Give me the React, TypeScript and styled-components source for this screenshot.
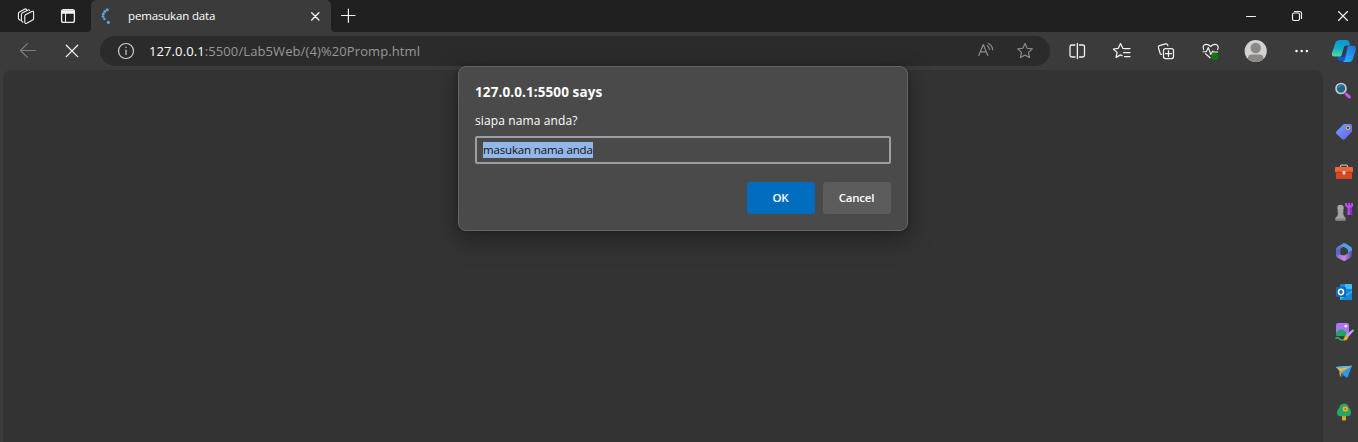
import React from "react";
import styled, { createGlobalStyle } from "styled-components";

const GlobalStyle = createGlobalStyle`
  * { box-sizing: border-box; }
  body { margin: 0; background: #3b3b3b; overflow: hidden; font-family: "Open Sans", "Noto Sans", sans-serif; }
`;

const Browser = styled.div`
  width: 1358px;
  height: 442px;
  display: flex;
  flex-direction: column;
  background: #3b3b3b;
  color: #fff;
`;

const TabBar = styled.div`
  height: 32px;
  display: flex;
  flex: none;
`;

const TabStripStart = styled.div`
  width: 91px;
  padding-left: 14px;
  display: flex;
  align-items: center;
  gap: 18px;
  background: #202020;
  border-bottom-right-radius: 4px;
`;

const TabBack = styled.div`
  width: 240px;
  background: linear-gradient(#202020 50%, #3b3b3b 50%);
`;

const Tab = styled.div`
  height: 32px;
  padding: 0 4px 0 3px;
  display: flex;
  align-items: center;
  background: #3b3b3b;
  border-radius: 5px 5px 0 0;
`;

const TabTitle = styled.span`
  flex: 1;
  margin-left: 10px;
  font-size: 11.5px;
  line-height: 16px;
  letter-spacing: -0.16px;
  white-space: nowrap;
`;

const TabStripEnd = styled.div`
  flex: 1;
  padding: 0 3px 0 5px;
  display: flex;
  align-items: center;
  background: #202020;
  border-bottom-left-radius: 4px;
`;

const WindowControls = styled.div`
  margin-left: auto;
  display: flex;
  gap: 22px;
`;

const Toolbar = styled.div`
  height: 38px;
  flex: none;
  display: flex;
  align-items: center;
  padding: 0 2px 0 16px;
`;

const Nav = styled.div`
  display: flex;
  gap: 20px;
`;

const AddressBar = styled.div`
  width: 950px;
  height: 30px;
  margin-left: 16px;
  padding: 0 13px 0 14px;
  display: flex;
  align-items: center;
  background: #2b2b2b;
  border-radius: 15px;
`;

const Url = styled.span`
  flex: 1;
  margin-left: 11px;
  font-size: 13px;
  line-height: 20px;
  letter-spacing: 0.1px;
  color: #989898;
  white-space: nowrap;
`;

const Host = styled.span`
  color: #fff;
`;

const Tools = styled.div`
  margin-left: 15px;
  display: flex;
  flex: 1;
  justify-content: space-between;
`;

const Glyph = styled.svg<{ $gap?: number }>`
  display: block;
  flex: none;
  width: 24px;
  height: 24px;
  margin-left: ${(p) => p.$gap ?? 0}px;
  overflow: visible;
`;

const Main = styled.div`
  flex: 1;
  display: flex;
  padding-left: 3px;
`;

const Page = styled.div`
  width: 1320px;
  background: #333;
  border-radius: 8px 8px 0 0;
`;

const Sidebar = styled.div`
  flex: 1;
  padding: 10px 0 0 9px;
  display: flex;
  flex-direction: column;
  gap: 16px;
`;

const Dialog = styled.div`
  position: absolute;
  left: 458px;
  top: 66px;
  width: 450px;
  height: 165px;
  padding: 15px 16px 16px;
  display: flex;
  flex-direction: column;
  background: #4a4a4a;
  border: 1px solid #666;
  border-radius: 8px;
  box-shadow: 0 8px 26px rgba(0, 0, 0, 0.38), 0 0 4px rgba(0, 0, 0, 0.2);
`;

const DialogTitle = styled.div`
  font-size: 13.5px;
  font-weight: 700;
  line-height: 20px;
  letter-spacing: 0.1px;
`;

const Message = styled.div`
  margin-top: 9px;
  font-size: 12px;
  line-height: 20px;
  letter-spacing: 0.12px;
`;

const Field = styled.div`
  height: 28px;
  margin-top: 5px;
  padding: 0 6px;
  display: flex;
  align-items: center;
  border: 2px solid #9aa0a6;
  border-radius: 2px;
`;

const Selection = styled.span`
  height: 16px;
  background: #94b7e9;
  color: #111;
  font-size: 11.5px;
  line-height: 16px;
  letter-spacing: -0.16px;
  white-space: nowrap;
`;

const Actions = styled.div`
  margin-top: 18px;
  display: flex;
  justify-content: flex-end;
  gap: 8px;
`;

const Button = styled.button<{ $primary?: boolean }>`
  width: 68px;
  height: 32px;
  padding: 0 1px 2px 0;
  border: 0;
  border-radius: 3px;
  background: ${(p) => (p.$primary ? "#006cbe" : "#5c5c5c")};
  color: #fff;
  font: 600 11.5px "Open Sans", "Noto Sans", sans-serif;
  letter-spacing: -0.2px;
`;

type IconProps = { gap?: number; color?: string; width?: number; children: React.ReactNode };

const Icon = ({ gap, color = "#f2f2f2", width = 1.15, children }: IconProps) => (
  <Glyph $gap={gap} viewBox="0 0 24 24" fill="none" stroke={color} strokeWidth={width} strokeLinecap="round" strokeLinejoin="round">
    {children}
  </Glyph>
);

const Art = ({ children }: { children: React.ReactNode }) => (
  <Glyph viewBox="0 0 24 24">{children}</Glyph>
);

const star = "M12 4.6l2.2 4.7 5.1.6-3.8 3.5 1 5.1-4.5-2.5-4.5 2.5 1-5.1-3.8-3.5 5.1-.6z";

const SidebarIcons = () => (
  <>
    <Art>
      <path d="M14.2 14.2l3.2 2.8" stroke="#d34cf4" strokeWidth="3" strokeLinecap="round" />
      <circle cx="9" cy="8.5" r="5" fill="#23658b" stroke="#c5c7c8" strokeWidth="1.7" />
      <path d="M6.5 8a3 3 0 0 1 3-2.5" fill="none" stroke="#3a91b9" strokeWidth="1.2" />
    </Art>
    <Art>
      <path d="M4.6 11.2L11.8 4h6.4q1.8 0 1.8 1.8v6l-7 7.2q-1.5 1.5-3 0l-5.4-5q-1.4-1.4 0-2.8z" fill="url(#tagBlue)" />
      <circle cx="16" cy="7.8" r="1.7" fill="#34435b" stroke="#f3c724" strokeWidth="1" />
    </Art>
    <Art>
      <path d="M8.5 8V6.2q0-1 1-1h5q1 0 1 1V8" fill="none" stroke="#b6b6b6" strokeWidth="1.3" />
      <rect x="3" y="7" width="18" height="5.5" rx="1" fill="#f06438" />
      <path d="M4 12h16v6q0 1-1 1H5q-1 0-1-1z" fill="#d64821" />
      <path d="M4 12.2h16" stroke="#a93419" strokeWidth=".8" />
      <rect x="10.5" y="11" width="3" height="3.6" rx="1" fill="#d9d9d9" />
    </Art>
    <Art>
      <path d="M13 3h2v2h1V3h2v2h1V3h2v3l-1.5 2 .8 7h-5l.4-7L13 6z" fill="#b84af1" />
      <path d="M17.5 8l.4 7h2.4l-.8-7z" fill="#8a2bd0" />
      <circle cx="8.5" cy="8" r="3.2" fill="#a8a8a8" />
      <path d="M5.5 10.5h6v1.8H11l.8 3.7 1.6 1.5V20.5H3.5v-3L5.4 16l.8-3.7h-.7z" fill="#a2a2a2" />
      <path d="M3.5 18.6h9.9v1.9H3.5z" fill="#878787" />
    </Art>
    <Art>
      <path d="M11.5 3.3L5.3 6.9Q4 7.8 4 9.2v6q0 1.6 1.4 2.4l4.1-2.5q-1-.8-1-2V9.4q0-1 .9-1.5l4.9-2.8z" fill="url(#officeLeft)" />
      <path d="M11.3 3.5q1.2-.6 2.4 0L18.8 6.8Q20 7.7 20 9.2V14l-4.5-2.3V10q0-1-.9-1.5L10.2 6z" fill="#529ee4" />
      <path d="M20 10.5v4.7q0 1.4-1.2 2.2l-5.2 3.2q-1.4.8-2.8 0L5 17.4l1.8-2.7 4.2.3q.8.2 1.6-.3l2.5-1.5z" fill="url(#officeBottom)" />
      <path d="M8.7 9.2l3.3-1.4 4 2.4v2.7L12.200 15.600 8.700 14.800z" fill="#3b3b3b" />
    </Art>
    <Art>
      <rect x="8" y="4" width="12" height="12" rx="1" fill="#1785d8" />
      <path d="M13 4h6q1 0 1 1v4h-7z" fill="#42bdf2" />
      <path d="M8 11l6 3.5 6-3.5v8q0 1-1 1H8z" fill="#35b5ee" />
      <path d="M8 19.800l12-7.300V19q0 1-1 1z" fill="#1685d5" />
      <rect x="4" y="7" width="10" height="10" rx="1" fill="#1068be" />
      <ellipse cx="9" cy="12" rx="2.5" ry="2.700" fill="none" stroke="#fff" strokeWidth="1.500" />
    </Art>
    <Art>
      <rect x="4" y="3" width="13" height="13" rx="2" fill="#ad73f0" />
      <path d="M4 13q5-7 10-1v4H6q-2 0-2-2z" fill="#22a365" />
      <circle cx="13.8" cy="6.2" r="1.4" fill="#f8e9ff" />
      <path d="M3.5 18.8q2-2 4 .1t4.5.5" fill="none" stroke="#28b36b" strokeWidth="1.5" />
      <path d="M21.5 9.700q1 .5-.2 1.800l-5.100 5.600-2.200-2 5.800-5q1-.8 1.700-.4z" fill="#bba0ff" />
      <path d="M14.200 14.700l2.300 2.200q-1.300 4-5.100 3.500.8-4.200 2.800-5.700z" fill="#f1ad30" />
    </Art>
    <Art>
      <path d="M4 7l16-1.200L15.300 18 9.600 13.800z" fill="#279cf0" />
      <path d="M4 7l16-1.200-10.600 6.400z" fill="#f5c247" />
      <path d="M4 7l16-1.200-2 1.200L8.200 8.800z" fill="#4ab5f7" />
      <path d="M20 5.800L9.400 12.200l-.6 5.100q-2-3-1.400-6.100z" fill="#e9a629" />
      <path d="M9.900 12.900l-1.100 4.400 3.300-2.100z" fill="#1770b7" />
    </Art>
    <Art>
      <rect x="10" y="14" width="4" height="6.500" rx="1" fill="#eda225" />
      <path d="M12 3.500q4.200.2 4.800 4.100 2.400 2.100 2.200 5.300-.3 3.200-3.500 3.300H8.300Q5 16 5 12.700q0-3.200 2.300-5Q7.800 4 12 3.500z" fill="#28a66a" />
      <path d="M13.300 5.800l.8 1.200 1.500-.3-.3 1.500 1.200.8-1.200.8.3 1.500-1.500-.3-.8 1.200-.8-1.200-1.500.3.3-1.500-1.200-.8 1.200-.8-.3-1.500 1.500.3z" fill="#f5b627" />
      <circle cx="13.300" cy="9" r=".9" fill="#ba5a17" />
    </Art>
  </>
);

export default function App() {
  return (
    <Browser>
      <GlobalStyle />
      <svg width="0" height="0" style={{ position: "absolute" }}>
        <defs>
          <linearGradient id="tagBlue" x2="1" y2="1"><stop stopColor="#70a7ff" /><stop offset="1" stopColor="#655bee" /></linearGradient>
          <linearGradient id="officeLeft" x2="0" y2="1"><stop stopColor="#48b3e3" /><stop offset=".5" stopColor="#685cc4" /><stop offset="1" stopColor="#4f7bdc" /></linearGradient>
          <linearGradient id="officeBottom"><stop stopColor="#a66ad3" /><stop offset=".5" stopColor="#c489dd" /><stop offset="1" stopColor="#4a48aa" /></linearGradient>
          <linearGradient id="pilotLeft" x1=".5" x2=".3" y2="1"><stop stopColor="#0797d4" /><stop offset=".5" stopColor="#12aec4" /><stop offset="1" stopColor="#52db97" /></linearGradient>
          <linearGradient id="pilotRight" x1="1" x2=".2" y2="1"><stop stopColor="#216fd7" /><stop offset="1" stopColor="#20b5fa" /></linearGradient>
        </defs>
      </svg>
      <TabBar>
        <TabStripStart>
          <Icon width={1.1}>
            <path d="M6.200 16.200l-1.200-.9q-.6-.5-.6-1.300V9.700q0-.9.8-1.400l5.600-3.200q1-.5 1.600.5M9 18.200l-1-.8q-.6-.5-.6-1.300V10.500q0-.9.8-1.400l5.800-3.200q1-.5 1.600.4" />
            <path d="M11.500 10.700l6.200-3.300q1.800-.7 1.900 1v6.200q0 1-.9 1.500l-6 3.200q-1.700.7-1.900-1v-6.200q0-.9.700-1.400z" />
          </Icon>
          <Icon width={1.3}>
            <rect x="5.600" y="5.600" width="12.800" height="12.800" rx="2" />
            <path d="M6 7h12v2H6z" fill="#f2f2f2" />
            <path d="M9.500 9v9" width="1" strokeWidth="1" />
          </Icon>
        </TabStripStart>
        <TabBack>
          <Tab>
            <Icon color="#58a6df">
              <g fill="#58a6df" stroke="none">
                <circle cx="13.300" cy="5.800" r="1.500" /><circle cx="10.800" cy="7.400" r="1.500" /><circle cx="9.300" cy="10" r="1.500" /><circle cx="9" cy="12.600" r="1.400" /><circle cx="10.400" cy="15" r="1.300" /><circle cx="14.400" cy="18.300" r="1.600" />
              </g>
            </Icon>
            <TabTitle>pemasukan data</TabTitle>
            <Icon width={1.4}><path d="M8.700 8.700l7.200 7.200m0-7.200l-7.200 7.200" /></Icon>
          </Tab>
        </TabBack>
        <TabStripEnd>
          <Icon width={1.2}><path d="M5.500 11.500h13.500M12.400 5v13.300" /></Icon>
          <WindowControls>
            <Icon width={1}><path d="M7.500 12.500h9" /></Icon>
            <Icon><rect x="7.500" y="9" width="7" height="7.500" rx="1.400" /><path d="M9.500 7.500h5q2 0 2 2v5" /></Icon>
            <Icon><path d="M7.500 7.500l9 9m0-9l-9 9" /></Icon>
          </WindowControls>
        </TabStripEnd>
      </TabBar>
      <Toolbar>
        <Nav>
          <Icon color="#808080"><path d="M4.500 11.500h15M11.500 4.700l-7 6.800 7 6.800" /></Icon>
          <Icon width={1.300}><path d="M6.300 6.200l11.400 11.400m0-11.400L6.300 17.600" /></Icon>
        </Nav>
        <AddressBar>
          <Icon color="#d0d0d0" width={1.200}><circle cx="12" cy="12" r="7.500" /><path d="M12 11v4.500M12 8.200v.2" /></Icon>
          <Url><Host>127.0.0.1</Host>:5500/Lab5Web/(4)%20Promp.html</Url>
          <Icon color="#8e8e8e"><path d="M4.800 16.500L9.300 5.500l4.500 11M6.600 12.800h5.500M13.100 6.600q2.300 1.400 2.300 4M14.400 4.400q4 1.800 4.200 6.300" /></Icon>
          <Icon gap={15} color="#8e8e8e"><path d={star} /></Icon>
        </AddressBar>
        <Tools>
          <Icon width={1.300}><path d="M10 6H6.800Q5 6 5 7.800v8.400Q5 18 6.800 18H10M14.500 6h3.200q1.800 0 1.800 1.800v8.400q0 1.800-1.800 1.800h-3.200M12.400 4.500v15" /></Icon>
          <Icon width={1.250}><path d="M14.500 9.500l-1.700-.2-2.300-4.700-2.200 4.700-4.900.7 3.700 3.400-1 5 4.400-2.500 1.600.8M14.500 9.500H20M13.500 13.500H20M14.500 17.500H20" /></Icon>
          <Icon width={1.250}><rect x="9.500" y="9.500" width="10" height="10" rx="2" /><path d="M14.500 11.500v6M11.500 14.500h6M7.600 15.300q-1 .2-1.400-.8L4.400 8.600q-.4-1.400 1-1.900l6-1.800q1.700-.5 2.200 1l.2.800" /></Icon>
          <Icon><path d="M4.700 10.600Q3.100 7 6 5.600 8.600 4.500 11.600 7.500q3-3 5.700-1.900 3 1.400 1.300 5M4 12.700h3.300l2-4.200 2.500 7 2-3.500.8 1h4M6.500 14.800l4.600 4" /><circle cx="16" cy="17.500" r="3.500" fill="#107c10" stroke="none" /><path d="M14.500 17.600l1 1 2-2" stroke="#075607" strokeWidth=".8" /></Icon>
          <Art>
            <circle cx="12.700" cy="12" r="11.100" fill="#d4d2d0" /><circle cx="12.700" cy="9" r="5.200" fill="#8b8887" /><path d="M4.900 19.800Q4.900 15.500 8.700 15.500h8q3.800 0 3.800 4.300a11 11 0 0 1-15.600 0z" fill="#8b8887" />
          </Art>
          <Icon><g fill="#fff" stroke="none"><circle cx="8.500" cy="12" r="1.250" /><circle cx="13.700" cy="12" r="1.250" /><circle cx="18.900" cy="12" r="1.250" /></g></Icon>
          <Art>
            <path d="M6 15l6.500-9 5.500 1-4.500 15H8q-1.700 0-2.300-2z" fill="#1751dd" />
            <path d="M10.600 12.500l2-5.600q.5-1.400 1.900-1.400h1.500l-3.200 11q-.5 1.500-2 1.500H9z" fill="#3b3b3b" />
            <path d="M7.800 1h7q1.700 0 2.400 2l1 3.500h-4q-2 0-2.600 2.200l-2 7.300q-.5 1.500-2 1.500H2Q-.6 17.500 0 14L3.300 4Q4.300 1 7.800 1z" fill="url(#pilotLeft)" />
            <path d="M17 6.800h4.500q2.800.2 2.400 3.700L21 20q-1 3-4 3h-7q2.200 0 3-2.500l3-12q.4-1.500 1-1.700z" fill="url(#pilotRight)" />
          </Art>
        </Tools>
      </Toolbar>
      <Main>
        <Page />
        <Sidebar><SidebarIcons /></Sidebar>
      </Main>
      <Dialog>
        <DialogTitle>127.0.0.1:5500 says</DialogTitle>
        <Message>siapa nama anda?</Message>
        <Field><Selection>masukan nama anda</Selection></Field>
        <Actions>
          <Button $primary>OK</Button>
          <Button>Cancel</Button>
        </Actions>
      </Dialog>
    </Browser>
  );
}
